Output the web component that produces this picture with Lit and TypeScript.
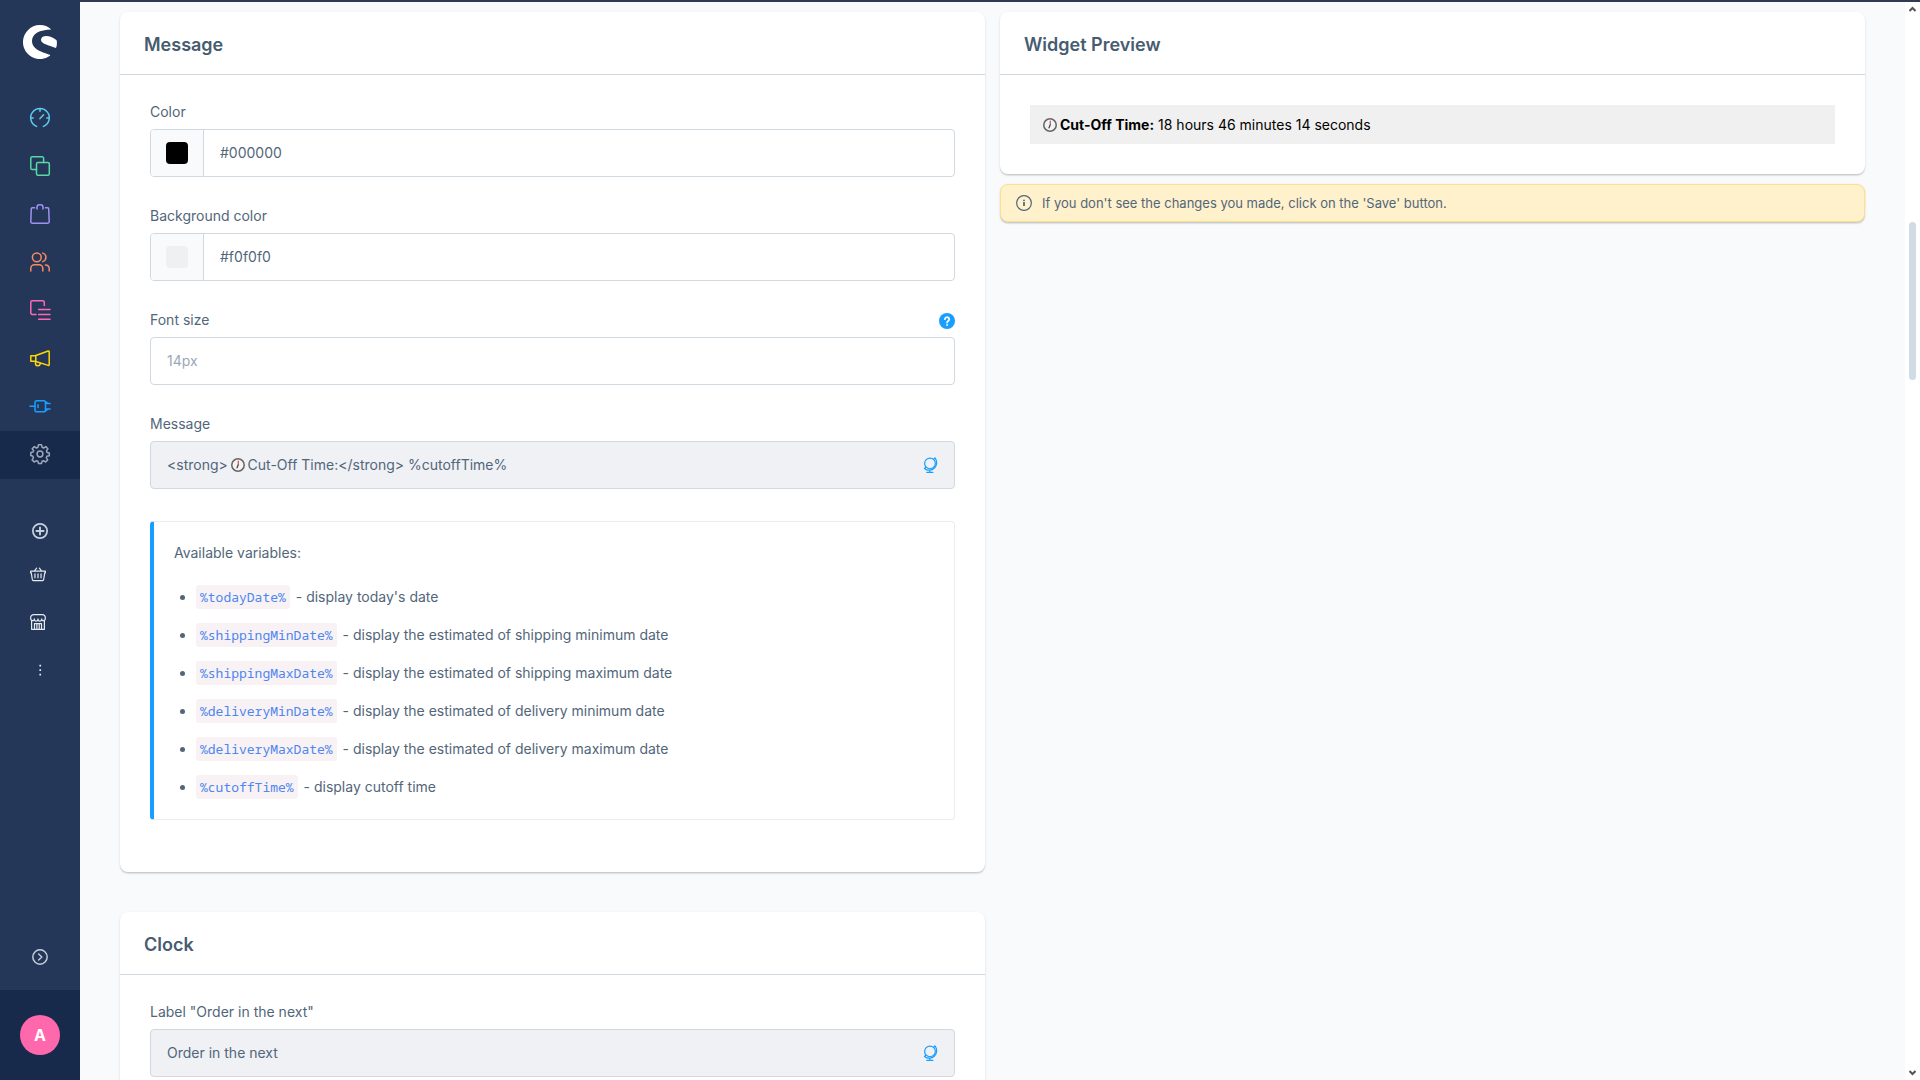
import { LitElement, html, css, svg, nothing } from "lit";
import { customElement, property } from "lit/decorators.js";

const icons: Record<string, unknown> = {
  dashboard: svg`<path d="M6.6 18.4A9.3 9.3 0 1 1 13.4 18.4M10 1v2.2M1 10h2.2M16.8 10H19M10 10.6l3.6-3.8"/>`,
  products: svg`<path d="M6.5 13.6H2.2A1.4 1.4 0 0 1 .8 12.200V2.200A1.4 1.4 0 0 1 2.200.8h10a1.400 1.400 0 0 1 1.400 1.400v4.300"/><rect x="6.500" y="6.500" width="12.800" height="12.700" rx="1.500"/>`,
  orders: svg`<path d="M4.600 3.700H2.300a1 1 0 0 0-1 1L.8 17.800a1.400 1.400 0 0 0 1.400 1.400h15.600a1.400 1.400 0 0 0 1.400-1.400L18.700 4.700a1 1 0 0 0-1-1h-2.300M7 5V3.200a2.400 2.400 0 0 1 2.400-2.400h1.200A2.400 2.400 0 0 1 13 3.200V5"/>`,
  customers: svg`<circle cx="6.800" cy="5.300" r="4.400"/><path d="M.8 19v-2.600a3.600 3.600 0 0 1 3.600-3.600h4.800a3.600 3.600 0 0 1 3.600 3.600V19M12.700 1.100a4.400 4.400 0 0 1 0 8.500M15.400 12.900a3.900 3.900 0 0 1 3.800 3.600V19"/>`,
  content: svg`<path d="M6 14.500H2.200A1.400 1.400 0 0 1 .8 13.100V2.200A1.400 1.400 0 0 1 2.200.8h10.700a1.400 1.400 0 0 1 1.400 1.400v3.300M8.600 9.500H20M8.600 14.500H20M8.600 19.300H20"/>`,
  marketing: svg`<path d="M.8 7.700h5v5.600h-5zM5.800 7.500L18.200 3a.8.8 0 0 1 1 .7v13a.8.800 0 0 1-1 .700L5.800 13.500M5.500 14v1.200a2.400 2.400 0 0 0 4.700.8v-.8"/>`,
  extensions: svg`<rect x="5" y="4.700" width="10.500" height="11" rx="1.800"/><path d="M0 10.200h5M8 8.800v2.800M15.500 7.400H20M15.500 13H20M15.500 5.500l2 1.500M15.500 15l2-1.500"/>`,
  settings: svg`<circle cx="10" cy="10" r="2.900"/><path d="M8.500.8h3l.6 2.500 1.500.7 2.200-1.400 2.100 2.100L16.500 7l.5 1.400 2.300.5v2.800l-2.400.6-.6 1.500 1.400 2.100-2.100 2.100-2.200-1.300-1.400.6-.5 2.200h-3l-.6-2.200-1.500-.6-2.200 1.300-2.100-2.100 1.400-2.200-.6-1.400L.8 11.500v-3l2.300-.5.600-1.300-1.500-2 2.100-2.100 2.200 1.400 1.400-.7z"/>`,
  plus: svg`<circle cx="10" cy="10" r="8.900" stroke-width="2.200"/><path stroke-width="2.400" d="M10 5.500v9M5.500 10h9"/>`,
  basket: svg`<path d="M.8 6.500h18.400v2.200h-.8l-1.300 8.200a1.400 1.400 0 0 1-1.400 1.300H4.300a1.400 1.400 0 0 1-1.400-1.300L1.600 8.700H.8zM5.300 6.300l3-3.600M14.700 6.300l-3-3.600M6.200 9.800v5M10 9.800v5M13.800 9.800v5"/>`,
  shop: svg`<path d="M2 9v10.200h16V9M.8 5A3.800 3.800 0 0 1 4.600.8h10.800A3.800 3.800 0 0 1 19.200 5c0 4.300-4.500 4.300-4.600 1.200 0 3.600-4.600 3.600-4.600 0 0 3.600-4.600 3.600-4.600 0C5.300 9.300.8 9.300.8 5zM5.600 19v-7h8.800v7M8.600 12v7M11.500 12v7"/>`,
  dots: svg`<path fill="currentColor" stroke="none" d="M9 1.200h2.800V4H9zM9 8.700h2.800v2.800H9zM9 16.200h2.800V19H9z"/>`,
  collapse: svg`<circle cx="10" cy="10" r="9" stroke-width="1.800"/><path stroke-width="1.800" d="M8.300 6.300l4 3.700-4 3.700"/>`,
  info: svg`<circle cx="10" cy="10" r="9.200" stroke-width="1.500"/><path stroke-width="2.200" stroke-linecap="butt" d="M10 8.800v5M10 5.800V7.600"/>`,
  help: svg`<circle cx="10" cy="10" r="10" fill="currentColor" stroke="none"/><path stroke="#fff" stroke-width="2.200" d="M7.400 7.700a2.700 2.500 0 1 1 4.200 2.100c-1 .7-1.500 1-1.500 2.100M10.100 14.800v.3"/>`,
  globe: svg`<circle cx="10" cy="8" r="6.700"/><path d="M16.200 1.200a9.300 9.300 0 0 1-13.100 13.100M14.600 2.800l1.600-1.600M3.100 14.300l1.600-1.500M9.800 17.300v2M6 19.300h7.600"/>`,
  clock: svg`<circle cx="10" cy="10" r="8.900" fill="#f3f3f3" stroke="#666" stroke-width="2.200"/><path stroke="#c04a66" stroke-width="1.600" d="M10.400 4.500v5"/><path stroke="#444" stroke-width="1.800" d="M10.200 10l-1.600 4"/>`,
};

@customElement("ui-icon")
export class UiIcon extends LitElement {
  @property() name = "";
  static styles = css`
    :host {
      display: inline-flex;
      flex: none;
      width: 20px;
      height: 20px;
    }
    .glyph {
      width: 100%;
      height: 100%;
      overflow: visible;
      fill: none;
      stroke: currentColor;
      stroke-width: 1.5;
      stroke-linecap: round;
      stroke-linejoin: round;
    }
  `;
  render() {
    return html`<svg class="glyph" viewBox="0 0 20 20" aria-hidden="true">${icons[this.name]}</svg>`;
  }
}

@customElement("admin-sidebar")
export class AdminSidebar extends LitElement {
  static styles = css`
    :host {
      display: flex;
      flex-direction: column;
      background: #243758;
      color: #c6d0de;
      font-family: Inter, "Liberation Sans", sans-serif;
    }
    .logo {
      display: flex;
      justify-content: center;
      padding: 25px 0 36px;
    }
    .logo svg {
      width: 34px;
      height: 34px;
      fill: #fff;
    }
    .nav {
      display: flex;
      flex-direction: column;
    }
    .quick {
      margin-top: 33px;
      flex: 1;
    }
    .item {
      box-sizing: border-box;
      display: flex;
      align-items: center;
      justify-content: center;
      height: 48px;
      color: inherit;
    }
    .main .item {
      padding-bottom: 2px;
    }
    .active {
      background: #182a4c;
      color: #9aa8b9;
    }
    .dashboard { color: #5fc9ea; }
    .products { color: #57d9a3; }
    .orders { color: #a092f0; }
    .customers { color: #f88962; }
    .content { color: #ff68b4; }
    .marketing { color: #ffd700; }
    .extensions { color: #189eff; }
    .small {
      width: 16px;
      height: 16px;
    }
    .left {
      padding-right: 4px;
    }
    .light {
      color: #e6eaf2;
    }
    .dots {
      width: 12px;
      height: 12px;
    }
    .add, .collapse, .user {
      border: 0;
      padding: 0;
      background: none;
      font: inherit;
    }
    .add {
      height: 38px;
    }
    .collapse {
      height: 66px;
    }
    .user {
      display: flex;
      align-items: center;
      justify-content: center;
      height: 90px;
      background: #182a4c;
    }
    .avatar {
      display: flex;
      align-items: center;
      justify-content: center;
      width: 40px;
      height: 40px;
      border-radius: 50%;
      background: #ff68ac;
      color: #fff;
      font-size: 16px;
      font-weight: 700;
      line-height: 16px;
    }
  `;
  render() {
    const main = ["dashboard", "products", "orders", "customers", "content", "marketing", "extensions"];
    return html`
      <div class="logo">
        <svg viewBox="0 0 34 34" aria-hidden="true">
          <path d="M28.300 4.400A17 17 0 1 0 27 30.800C27.300 30.300 27.200 30 26.600 29.700C20 27 9 25 9 16C9 8.500 16.500 4.700 28.300 4.400Z" />
          <path d="M18 15C18 12 20.400 10.800 24 11C28 11.300 31 13 33.600 15.300C34.200 18 34 20.800 33 23C27 20.600 18 19 18 15Z" />
        </svg>
      </div>
      <nav class="nav main" aria-label="Main">
        ${main.map((n) => html`<a class="item ${n}" href="#${n}" aria-label=${n}><ui-icon name=${n}></ui-icon></a>`)}
        <a class="item active" href="#settings" aria-label="settings" aria-current="page"><ui-icon name="settings"></ui-icon></a>
      </nav>
      <nav class="nav quick" aria-label="Sales channels">
        <button class="item add" aria-label="Add channel"><ui-icon class="small" name="plus"></ui-icon></button>
        <a class="item left light" href="#basket" aria-label="Basket"><ui-icon class="small" name="basket"></ui-icon></a>
        <a class="item left light" href="#storefront" aria-label="Storefront"><ui-icon class="small" name="shop"></ui-icon></a>
        <a class="item light" href="#more" aria-label="More"><ui-icon class="dots" name="dots"></ui-icon></a>
      </nav>
      <button class="item collapse" aria-label="Expand menu"><ui-icon class="small" name="collapse"></ui-icon></button>
      <button class="user" aria-label="User menu"><span class="avatar">A</span></button>
    `;
  }
}

@customElement("setting-field")
export class SettingField extends LitElement {
  @property() label = "";
  @property() value = "";
  @property() placeholder = "";
  @property() swatch = "";
  @property({ type: Boolean }) help = false;
  @property({ type: Boolean }) inherited = false;
  @property({ type: Boolean }) clock = false;

  static styles = css`
    :host {
      display: flex;
      flex-direction: column;
      gap: 8px;
      font-family: Inter, "Liberation Sans", sans-serif;
      font-size: 14px;
      color: #52667a;
    }
    .top {
      display: flex;
      align-items: flex-start;
      justify-content: space-between;
      height: 16px;
      line-height: 14px;
    }
    .help {
      display: flex;
      border: 0;
      padding: 0;
      background: none;
      color: #189eff;
    }
    .help ui-icon, .globe ui-icon {
      width: 16px;
      height: 16px;
    }
    .box {
      position: relative;
      display: flex;
      height: 46px;
      border: 1px solid #d1d9e0;
      border-radius: 4px;
      background: #fff;
      overflow: hidden;
    }
    .inherited {
      background: #f0f1f5;
    }
    .text {
      flex: 1;
      min-width: 0;
      border: 0;
      outline: 0;
      padding: 0 16px 1px;
      background: transparent;
      font: inherit;
      color: inherit;
    }
    .text::placeholder {
      color: #9aa8b8;
      opacity: 1;
    }
    .picker {
      display: flex;
      align-items: center;
      justify-content: center;
      width: 53px;
      padding: 0;
      border: 0;
      border-right: 1px solid #d1d9e0;
      background: #f9fafb;
    }
    .swatch {
      width: 22px;
      height: 22px;
      border-radius: 4px;
    }
    .globe {
      display: flex;
      align-items: center;
      border: 0;
      padding: 0 16px 0 0;
      background: none;
      color: #189eff;
    }
    .emoji {
      position: absolute;
      left: 80px;
      top: 16px;
      width: 14px;
      height: 14px;
    }
  `;
  render() {
    return html`
      <div class="top">
        <label for="field">${this.label}</label>
        ${this.help ? html`<button class="help" aria-label="Help"><ui-icon name="help"></ui-icon></button>` : nothing}
      </div>
      <div class="box ${this.inherited ? "inherited" : ""}">
        ${this.swatch
          ? html`<button class="picker" aria-label="Pick color"><span class="swatch" style="background:${this.swatch}"></span></button>`
          : nothing}
        <input class="text" id="field" type="text" .value=${this.value} placeholder=${this.placeholder} ?readonly=${this.inherited} />
        ${this.clock ? html`<ui-icon class="emoji" name="clock"></ui-icon>` : nothing}
        ${this.inherited ? html`<button class="globe" aria-label="Translatable"><ui-icon name="globe"></ui-icon></button>` : nothing}
      </div>
    `;
  }
}

@customElement("ui-card")
export class UiCard extends LitElement {
  @property() heading = "";
  static styles = css`
    :host {
      display: block;
      background: #fff;
      border-radius: 8px;
      box-shadow: 0 1px 1px rgba(0, 0, 0, 0.08), 0 2px 1px rgba(0, 0, 0, 0.06), 0 1px 3px rgba(0, 0, 0, 0.1);
    }
    .heading {
      margin: 0;
      padding: 21px 24px 17px;
      border-bottom: 1px solid #d1d9e0;
      font-size: 18px;
      font-weight: 600;
      line-height: 24px;
      color: #475c70;
    }
    .body {
      padding: 30px;
    }
  `;
  render() {
    return html`<h2 class="heading">${this.heading}</h2><div class="body"><slot></slot></div>`;
  }
}

const variables: [string, string][] = [
  ["%todayDate%", "display today's date"],
  ["%shippingMinDate%", "display the estimated of shipping minimum date"],
  ["%shippingMaxDate%", "display the estimated of shipping maximum date"],
  ["%deliveryMinDate%", "display the estimated of delivery minimum date"],
  ["%deliveryMaxDate%", "display the estimated of delivery maximum date"],
  ["%cutoffTime%", "display cutoff time"],
];

@customElement("app-root")
export class AppRoot extends LitElement {
  static styles = css`
    :host {
      display: grid;
      grid-template-columns: 80px minmax(0, 1fr);
      height: 100vh;
      overflow: hidden;
      font-family: Inter, "Liberation Sans", sans-serif;
      font-size: 14px;
      color: #52667a;
      background: #f9fafb;
    }
    .page {
      display: flex;
      min-height: 0;
      border-top: 2px solid #303a50;
    }
    .content {
      flex: 1;
      display: grid;
      grid-template-columns: repeat(2, minmax(0, 1fr));
      gap: 15px;
      align-items: start;
      padding: 10px 40px 0;
      min-height: 0;
      overflow: hidden;
    }
    .column {
      display: flex;
      flex-direction: column;
      gap: 40px;
    }
    .aside {
      gap: 10px;
    }
    .fields {
      display: flex;
      flex-direction: column;
      gap: 32px;
    }
    .variables {
      margin-bottom: 22px;
      padding: 20px 20px 21px;
      border: 1px solid #eaecf0;
      border-left: 4px solid #189eff;
      border-radius: 4px;
      line-height: 22px;
    }
    .intro {
      margin: 0 0 22px;
    }
    .list {
      display: flex;
      flex-direction: column;
      gap: 16px;
      margin: 0;
      padding-left: 22px;
    }
    .code {
      padding: 3px 4px;
      border-radius: 3px;
      background: #f9f2f4;
      color: #4d86f0;
      font-family: "Noto Sans Mono", "Liberation Mono", monospace;
      font-size: 13px;
      line-height: 15px;
      margin-right: 2px;
    }
    .preview {
      display: flex;
      align-items: center;
      gap: 3px;
      padding: 10px 13px;
      background: #f0f0f0;
      color: #000;
      line-height: 19px;
    }
    .preview ui-icon {
      width: 14px;
      height: 14px;
    }
    .notice {
      display: flex;
      align-items: center;
      gap: 10px;
      padding: 8px 15px;
      border: 1px solid #ffdf8a;
      border-radius: 8px;
      background: #fff1cc;
      box-shadow: 0 1px 1px rgba(0, 0, 0, 0.08), 0 2px 1px rgba(0, 0, 0, 0.06), 0 1px 3px rgba(0, 0, 0, 0.1);
      font-size: 13px;
      line-height: 20px;
    }
    .notice ui-icon {
      width: 16px;
      height: 16px;
    }
    .scrollbar {
      display: flex;
      flex-direction: column;
      align-items: center;
      justify-content: space-between;
      width: 15px;
      padding: 4px 0;
      background: #fff;
    }
    .arrow {
      width: 7px;
      height: 6px;
      fill: none;
      stroke: #555;
      stroke-width: 2;
    }
    .track {
      flex: 1;
      display: flex;
      flex-direction: column;
      width: 7px;
    }
    .before {
      flex: 210;
    }
    .thumb {
      flex: 158;
      border-radius: 4px;
      background: #d1dbe4;
    }
    .after {
      flex: 690;
    }
  `;
  render() {
    return html`
      <admin-sidebar></admin-sidebar>
      <div class="page">
        <main class="content">
          <div class="column">
            <ui-card heading="Message">
              <div class="fields">
                <setting-field label="Color" value="#000000" swatch="#000000"></setting-field>
                <setting-field label="Background color" value="#f0f0f0" swatch="#f0f0f0"></setting-field>
                <setting-field label="Font size" placeholder="14px" help></setting-field>
                <setting-field
                  label="Message"
                  .value=${"<strong>\u2003\u2005\u2006Cut-Off Time:</strong> %cutoffTime%"}
                  inherited
                  clock
                ></setting-field>
                <section class="variables">
                  <p class="intro">Available variables:</p>
                  <ul class="list">
                    ${variables.map(([name, text]) => html`<li><code class="code">${name}</code> - ${text}</li>`)}
                  </ul>
                </section>
              </div>
            </ui-card>
            <ui-card heading="Clock">
              <setting-field label='Label "Order in the next"' value="Order in the next" inherited></setting-field>
            </ui-card>
          </div>
          <div class="column aside">
            <ui-card heading="Widget Preview">
              <div class="preview">
                <ui-icon name="clock"></ui-icon>
                <span><strong>Cut-Off Time:</strong> 18 hours 46 minutes 14 seconds</span>
              </div>
            </ui-card>
            <div class="notice" role="status">
              <ui-icon name="info"></ui-icon>
              <span>If you don't see the changes you made, click on the 'Save' button.</span>
            </div>
          </div>
        </main>
        <div class="scrollbar" aria-hidden="true">
          <svg class="arrow" viewBox="0 0 7 6"><path d="M.5 5L3.500 2l3 3" /></svg>
          <div class="track">
            <div class="before"></div>
            <div class="thumb"></div>
            <div class="after"></div>
          </div>
          <svg class="arrow" viewBox="0 0 7 6"><path d="M.5 1l3 3 3-3" /></svg>
        </div>
      </div>
    `;
  }
}
